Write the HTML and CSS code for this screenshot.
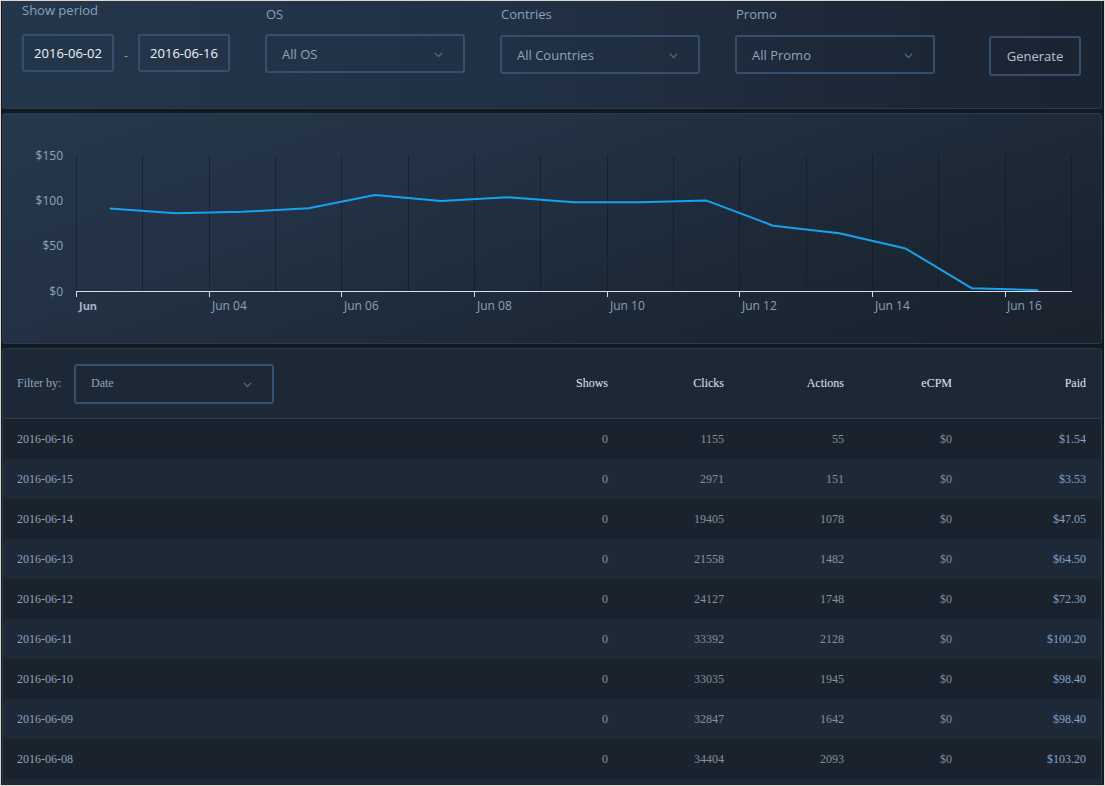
FILE: index.html
```html
<!DOCTYPE html>
<html>
<head>
<meta charset="utf-8">
<title>Report</title>
<link rel="stylesheet" href="styles.css">
</head>
<body>
<div class="app">
  <section class="panel filters">
    <div class="group period">
      <div class="label">Show period</div>
      <div class="range">
        <div class="date-input">2016-06-02</div>
        <span class="dash">-</span>
        <div class="date-input">2016-06-16</div>
      </div>
    </div>
    <div class="group">
      <div class="label">OS</div>
      <div class="select">All OS<svg class="chev" width="9" height="6" viewBox="0 0 9 6"><polyline points="0.8,0.8 4.5,4.5 8.2,0.8"/></svg></div>
    </div>
    <div class="group">
      <div class="label">Contries</div>
      <div class="select low">All Countries<svg class="chev" width="9" height="6" viewBox="0 0 9 6"><polyline points="0.8,0.8 4.5,4.5 8.2,0.8"/></svg></div>
    </div>
    <div class="group">
      <div class="label">Promo</div>
      <div class="select low">All Promo<svg class="chev" width="9" height="6" viewBox="0 0 9 6"><polyline points="0.8,0.8 4.5,4.5 8.2,0.8"/></svg></div>
    </div>
    <button class="btn">Generate</button>
  </section>

  <section class="panel chart">
    <svg class="plot" width="1097" height="229" viewBox="3 114 1097 229">
      <g class="grid">
        <line x1="76.5" y1="155" x2="76.5" y2="291"/>
        <line x1="142.5" y1="155" x2="142.5" y2="291"/>
        <line x1="209.5" y1="155" x2="209.5" y2="291"/>
        <line x1="275.5" y1="155" x2="275.5" y2="291"/>
        <line x1="341.5" y1="155" x2="341.5" y2="291"/>
        <line x1="408.5" y1="155" x2="408.5" y2="291"/>
        <line x1="474.5" y1="155" x2="474.5" y2="291"/>
        <line x1="540.5" y1="155" x2="540.5" y2="291"/>
        <line x1="607.5" y1="155" x2="607.5" y2="291"/>
        <line x1="673.5" y1="155" x2="673.5" y2="291"/>
        <line x1="739.5" y1="155" x2="739.5" y2="291"/>
        <line x1="806.5" y1="155" x2="806.5" y2="291"/>
        <line x1="872.5" y1="155" x2="872.5" y2="291"/>
        <line x1="938.5" y1="155" x2="938.5" y2="291"/>
        <line x1="1005.5" y1="155" x2="1005.5" y2="291"/>
        <line x1="1071.5" y1="155" x2="1071.5" y2="291"/>
      </g>
      <g class="ylab">
        <text x="63" y="159.5">$150</text>
        <text x="63" y="204.5">$100</text>
        <text x="63" y="250">$50</text>
        <text x="63" y="295.5">$0</text>
      </g>
      <g class="axis">
        <line x1="76" y1="291.5" x2="1072" y2="291.5"/>
        <line x1="76.5" y1="291" x2="76.5" y2="297"/>
        <line x1="209.5" y1="291" x2="209.5" y2="297"/>
        <line x1="341.5" y1="291" x2="341.5" y2="297"/>
        <line x1="474.5" y1="291" x2="474.5" y2="297"/>
        <line x1="607.5" y1="291" x2="607.5" y2="297"/>
        <line x1="739.5" y1="291" x2="739.5" y2="297"/>
        <line x1="872.5" y1="291" x2="872.5" y2="297"/>
        <line x1="1005.5" y1="291" x2="1005.5" y2="297"/>
      </g>
      <g class="xlab">
        <text class="first" x="79" y="310">Jun</text>
        <text x="212" y="310">Jun 04</text>
        <text x="344" y="310">Jun 06</text>
        <text x="477" y="310">Jun 08</text>
        <text x="610" y="310">Jun 10</text>
        <text x="742" y="310">Jun 12</text>
        <text x="875" y="310">Jun 14</text>
        <text x="1007" y="310">Jun 16</text>
      </g>
      <polyline class="series" points="109.7,208.5 176,213.3 242.3,211.8 308.6,208.3 375,195 441.3,201 507.6,197.3 574,202.2 640.3,202.2 706.6,200.6 773,225.7 839.3,233.2 905.6,248.5 972,288.3 1038.3,290.2"/>
    </svg>
  </section>

  <section class="panel report">
    <div class="row head">
      <div class="cell first">
        <span class="filter-label">Filter by:</span>
        <div class="select small">Date<svg class="chev" width="9" height="6" viewBox="0 0 9 6"><polyline points="0.8,0.8 4.5,4.5 8.2,0.8"/></svg></div>
      </div>
      <div class="cell num">Shows</div>
      <div class="cell num">Clicks</div>
      <div class="cell num">Actions</div>
      <div class="cell num">eCPM</div>
      <div class="cell num">Paid</div>
    </div>
    <div class="row dark"><div class="cell first">2016-06-16</div><div class="cell num">0</div><div class="cell num">1155</div><div class="cell num">55</div><div class="cell num">$0</div><div class="cell num paid">$1.54</div></div>
    <div class="row"><div class="cell first">2016-06-15</div><div class="cell num">0</div><div class="cell num">2971</div><div class="cell num">151</div><div class="cell num">$0</div><div class="cell num paid">$3.53</div></div>
    <div class="row dark"><div class="cell first">2016-06-14</div><div class="cell num">0</div><div class="cell num">19405</div><div class="cell num">1078</div><div class="cell num">$0</div><div class="cell num paid">$47.05</div></div>
    <div class="row"><div class="cell first">2016-06-13</div><div class="cell num">0</div><div class="cell num">21558</div><div class="cell num">1482</div><div class="cell num">$0</div><div class="cell num paid">$64.50</div></div>
    <div class="row dark"><div class="cell first">2016-06-12</div><div class="cell num">0</div><div class="cell num">24127</div><div class="cell num">1748</div><div class="cell num">$0</div><div class="cell num paid">$72.30</div></div>
    <div class="row"><div class="cell first">2016-06-11</div><div class="cell num">0</div><div class="cell num">33392</div><div class="cell num">2128</div><div class="cell num">$0</div><div class="cell num paid">$100.20</div></div>
    <div class="row dark"><div class="cell first">2016-06-10</div><div class="cell num">0</div><div class="cell num">33035</div><div class="cell num">1945</div><div class="cell num">$0</div><div class="cell num paid">$98.40</div></div>
    <div class="row"><div class="cell first">2016-06-09</div><div class="cell num">0</div><div class="cell num">32847</div><div class="cell num">1642</div><div class="cell num">$0</div><div class="cell num paid">$98.40</div></div>
    <div class="row dark"><div class="cell first">2016-06-08</div><div class="cell num">0</div><div class="cell num">34404</div><div class="cell num">2093</div><div class="cell num">$0</div><div class="cell num paid">$103.20</div></div>
  </section>
</div>
</body>
</html>
```

FILE: styles.css
```css
* { box-sizing: border-box; }

html, body {
  margin: 0;
  padding: 0;
  background: #dcd6cc;
}

body {
  width: 1105px;
  height: 786px;
  overflow: hidden;
}

.app {
  margin: 1px;
  width: 1103px;
  height: 784px;
  background: #121920;
  padding: 0 2px 0 1px;
  display: flex;
  flex-direction: column;
  gap: 4px;
  overflow: hidden;
  font-family: "Open Sans", "Liberation Sans", sans-serif;
}

.panel {
  border: 1px solid #2a3b4f;
  border-radius: 3px;
  flex: none;
}

/* ---------- filters ---------- */
.filters {
  height: 108px;
  border-top: none;
  border-radius: 0 0 3px 3px;
  background: linear-gradient(90deg, #24364a 0%, #213145 45%, #1d2939 75%, #1a2330 100%);
  display: flex;
  align-items: flex-start;
  padding-left: 19px;
  gap: 35px;
}

.group {
  display: flex;
  flex-direction: column;
  padding-top: 4px;
}

.group.period { padding-top: 0; }

.label {
  font-size: 13px;
  line-height: 18px;
  height: 18px;
  color: #8aa2bb;
  margin-bottom: 11px;
  padding-left: 1px;
}

.group.period .label { margin-bottom: 15px; padding-left: 0; }

.range {
  display: flex;
  align-items: center;
}

.date-input {
  width: 92px;
  height: 38px;
  border: 2px solid #33506f;
  border-radius: 3px;
  display: flex;
  align-items: center;
  justify-content: center;
  font-size: 13px;
  color: #f1f5f9;
}

.dash {
  width: 24px;
  text-align: center;
  color: #8aa0b8;
  font-size: 12px;
  padding-top: 4px;
}

.select {
  position: relative;
  width: 200px;
  height: 39px;
  border: 2px solid #33506f;
  border-radius: 3px;
  display: flex;
  align-items: center;
  padding-left: 15px;
  font-size: 13px;
  color: #8fa6be;
}

.select.low { margin-top: 1px; }

.chev {
  position: absolute;
  right: 20px;
  top: 50%;
  margin-top: -2px;
  fill: none;
  stroke: #4b6582;
  stroke-width: 1.3;
}

.btn {
  margin-top: 35px;
  margin-left: 19px;
  width: 92px;
  height: 40px;
  border: 2px solid #33506f;
  border-radius: 3px;
  background: transparent;
  color: #b5c4d3;
  font-family: "Open Sans", "Liberation Sans", sans-serif;
  font-size: 13px;
  padding: 0;
}

/* ---------- chart ---------- */
.chart {
  height: 231px;
  background: linear-gradient(160deg, #27384c 0%, #223143 35%, #1d2937 65%, #19212c 100%);
}

.plot { display: block; }

.grid line {
  stroke: rgba(12, 18, 26, 0.45);
  stroke-width: 1;
}

.axis line {
  stroke: #d5dde6;
  stroke-width: 1;
}

.ylab text {
  font-family: "Open Sans", "Liberation Sans", sans-serif;
  font-size: 12px;
  fill: #8ea5be;
  text-anchor: end;
}

.xlab text {
  font-family: "Open Sans", "Liberation Sans", sans-serif;
  font-size: 12px;
  fill: #8aa1b9;
}

.xlab text.first {
  font-weight: 700;
  fill: #a3b6ca;
  font-size: 11px;
}

.series {
  fill: none;
  stroke: #17a2ef;
  stroke-width: 2;
  stroke-linejoin: round;
}

/* ---------- table ---------- */
.report {
  flex: 1;
  border-bottom: none;
  border-radius: 3px 3px 0 0;
  background: #1d2937;
  font-family: "Liberation Serif", "Times New Roman", serif;
  font-size: 12px;
}

.row {
  display: grid;
  grid-template-columns: 1fr 100px 116px 120px 108px 134px;
  padding-right: 15px;
  height: 40px;
  align-items: center;
  color: #84919f;
}

.row.dark { background: #19222d; }

.row.head {
  height: 70px;
  background: #1c2836;
  border-bottom: 1px solid #2c3f54;
  color: #e1e7ee;
}

.cell.first {
  padding-left: 14px;
  color: #8ea4bb;
  display: flex;
  align-items: center;
}

.row.head .cell.first { color: #8ea4bb; }

.cell.num { text-align: right; }

.cell.paid { color: #82a2c8; }

.filter-label {
  width: 57px;
}

.select.small {
  width: 200px;
  height: 40px;
  font-family: "Liberation Serif", "Times New Roman", serif;
  font-size: 12px;
  color: #8ea4bb;
  padding-left: 15px;
}
```
